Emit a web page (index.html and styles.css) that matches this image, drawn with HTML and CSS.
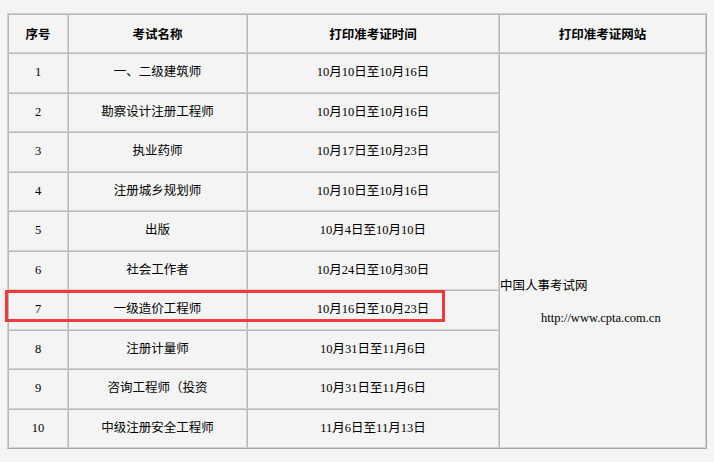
FILE: index.html
```html
<!DOCTYPE html>
<html lang="zh-CN">
<head>
<meta charset="utf-8">
<title>打印准考证时间</title>
<link rel="stylesheet" href="styles.css">
</head>
<body>
<div class="wrap">
<table class="exam">
  <colgroup>
    <col class="c1"><col class="c2"><col class="c3"><col class="c4">
  </colgroup>
  <thead>
    <tr class="head">
      <th>序号</th><th>考试名称</th><th>打印准考证时间</th><th>打印准考证网站</th>
    </tr>
  </thead>
  <tbody>
    <tr class="r"><td>1</td><td>一、二级建筑师</td><td>10月10日至10月16日</td>
      <td class="site" rowspan="10"><div class="site-name">中国人事考试网</div><div class="site-url">http://www.cpta.com.cn</div></td></tr>
    <tr class="r"><td>2</td><td>勘察设计注册工程师</td><td>10月10日至10月16日</td></tr>
    <tr class="r"><td>3</td><td>执业药师</td><td>10月17日至10月23日</td></tr>
    <tr class="r"><td>4</td><td>注册城乡规划师</td><td>10月10日至10月16日</td></tr>
    <tr class="r"><td>5</td><td>出版</td><td>10月4日至10月10日</td></tr>
    <tr class="r"><td>6</td><td>社会工作者</td><td>10月24日至10月30日</td></tr>
    <tr class="r"><td>7</td><td>一级造价工程师</td><td>10月16日至10月23日</td></tr>
    <tr class="r"><td>8</td><td>注册计量师</td><td>10月31日至11月6日</td></tr>
    <tr class="r"><td>9</td><td>咨询工程师（投资</td><td>10月31日至11月6日</td></tr>
    <tr class="r"><td>10</td><td>中级注册安全工程师</td><td>11月6日至11月13日</td></tr>
  </tbody>
</table>
<div class="mark"></div>
</div>
</body>
</html>
```

FILE: styles.css
```css
html, body {
  margin: 0;
  padding: 0;
  background: #f4f4f4;
}
body {
  font-family: "Liberation Serif", "Noto Sans CJK SC", serif;
  font-size: 12.5px;
  color: #000;
}
.wrap {
  position: relative;
  padding: 13px 0 0 7px;
}
.exam {
  border-collapse: separate;
  border-spacing: 0;
  table-layout: fixed;
  width: 698px;
  border-top: 1px solid #cfcfcf;
  border-left: 1px solid #cfcfcf;
  border-right: 1px solid #a4a4a4;
  border-bottom: 1px solid #a4a4a4;
  background: #f4f4f4;
}
.c1 { width: 60px; }
.c2 { width: 179px; }
.c3 { width: 252px; }
.c4 { width: 207px; }
.exam th, .exam td {
  border-top: 1px solid #b8b8b8;
  border-left: 1px solid #b8b8b8;
  border-right: 1px solid #d2d2d2;
  border-bottom: 1px solid #d2d2d2;
  text-align: center;
  vertical-align: middle;
  padding: 0;
  line-height: 17px;
}
.exam th {
  font-weight: bold;
  font-family: "Noto Sans CJK SC", sans-serif;
  font-size: 12.5px;
}
.head { height: 39px; }
.r { height: 39.5px; }
.exam td.site {
  text-align: left;
  vertical-align: top;
  padding-top: 222px;
}
.site-name {
  font-family: "Noto Sans CJK SC", sans-serif;
  height: 34px;
}
.site-url {
  padding-left: 41px;
}
.mark {
  position: absolute;
  left: 5px;
  top: 290px;
  width: 434px;
  height: 26px;
  border: 3px solid #f23a3a;
}
```
